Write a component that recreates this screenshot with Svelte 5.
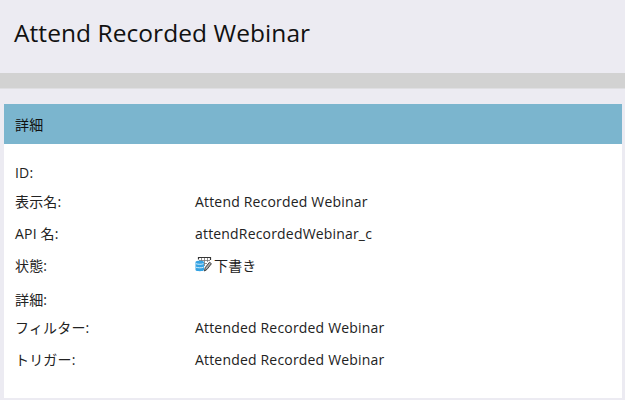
<script>
  const rows = [
    { label: 'ID:', value: '', gap: 18 },
    { label: '表示名:', value: 'Attend Recorded Webinar', gap: 7 },
    { label: 'API 名:', value: 'attendRecordedWebinar_c', gap: 10 },
    { label: '状態:', value: '下書き', gap: 10, draft: true },
    { label: '詳細:', value: '', gap: 12 },
    { label: 'フィルター:', value: 'Attended Recorded Webinar', gap: 6 },
    { label: 'トリガー:', value: 'Attended Recorded Webinar', gap: 10 }
  ];
</script>

<main>
  <header><h1>Attend Recorded Webinar</h1></header>
  <div class="toolbar"></div>
  <section>
    <h2>詳細</h2>
    <dl>
      {#each rows as row}
        <div class="row" style:margin-top="{row.gap}px">
          <dt>{row.label}</dt>
          <dd>
            {#if row.draft}
              <svg width="17" height="17" viewBox="0 0 17 17" aria-hidden="true">
                <path d="M3.5 3.5V1.5H15.5V4" fill="none" stroke="#333" stroke-width="1.2" />
                <path d="M6.5 2v3M9.5 2v8M12.5 2v4M4 4.5h11M9 7.5h3" fill="none" stroke="#777" stroke-width=".8" />
                <path d="M9.5 15l.6-3.2 4.4-5.6 1.9 1.5-4.4 5.7z" fill="#aaa" stroke="#333" stroke-width=".9" />
                <path d="M.5 6c0-1.6 8.5-1.6 8.5 0v8c0 1.6-8.5 1.6-8.5 0z" fill="#35a3e3" />
                <path d="M1 7.7c2 .8 5.5.8 7.5 0M1 11.2c2 .8 5.5.8 7.5 0" fill="none" stroke="#d5eefb" stroke-width="1" />
              </svg>
            {/if}
            <span>{row.value}</span>
          </dd>
        </div>
      {/each}
    </dl>
  </section>
</main>

<style>
  :global(body) { background: #ecebf2; }
  main {
    height: 400px;
    box-sizing: border-box;
    overflow: hidden;
    background: #ecebf2;
    color: #222;
    font: 14px/22px "Open Sans", "Noto Sans CJK JP", sans-serif;
    letter-spacing: .18px;
  }
  header { height: 73px; box-sizing: border-box; padding: 16px 14px 0; }
  h1 { margin: 0; font-size: 24.5px; letter-spacing: .06px; line-height: 33px; font-weight: 400; color: #111; white-space: nowrap; }
  .toolbar { height: 15px; background: #d2d2d2; border-bottom: 1px solid #dfdfe2; }
  section { height: 294px; margin: 15px 3px 0 4px; background: #fff; }
  h2 { display: flex; align-items: center; height: 40px; margin: 0; padding: 2px 11px 0; box-sizing: border-box; background: #7bb5ce; font-size: 14px; font-weight: 400; color: #111; }
  dl { display: flex; flex-direction: column; margin: 0; padding: 0 11px; }
  .row { display: grid; grid-template-columns: 180px 1fr; height: 22px; white-space: nowrap; }
  dt, dd { margin: 0; height: 22px; }
  dd { display: flex; align-items: center; gap: 2px; }
  svg { display: block; margin-top: -3px; }
</style>
